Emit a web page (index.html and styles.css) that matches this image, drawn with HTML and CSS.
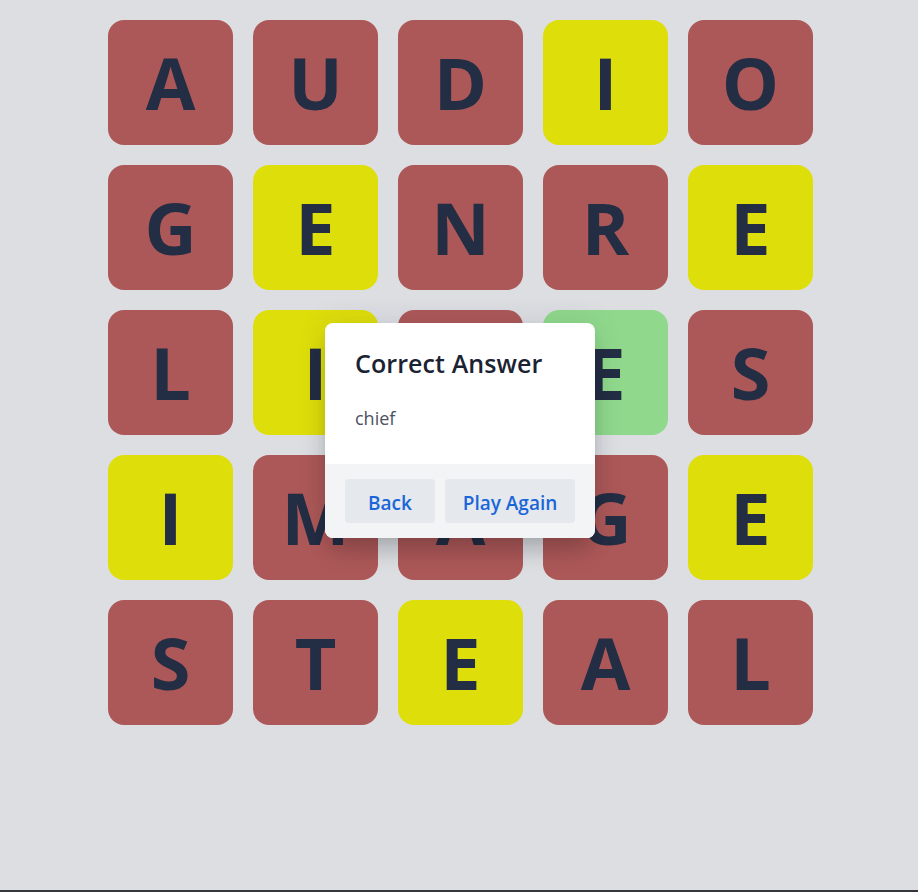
FILE: index.html
```html
<!DOCTYPE html>
<html lang="en">
<head>
<meta charset="utf-8">
<title>Word Game</title>
<link rel="stylesheet" href="styles.css">
</head>
<body>
<main class="page">
  <div class="board">
    <div class="tile red">A</div>
    <div class="tile red">U</div>
    <div class="tile red">D</div>
    <div class="tile yellow">I</div>
    <div class="tile red">O</div>

    <div class="tile red">G</div>
    <div class="tile yellow">E</div>
    <div class="tile red">N</div>
    <div class="tile red">R</div>
    <div class="tile yellow">E</div>

    <div class="tile red">L</div>
    <div class="tile yellow">I</div>
    <div class="tile red">K</div>
    <div class="tile green">E</div>
    <div class="tile red">S</div>

    <div class="tile yellow">I</div>
    <div class="tile red">M</div>
    <div class="tile red">A</div>
    <div class="tile red">G</div>
    <div class="tile yellow">E</div>

    <div class="tile red">S</div>
    <div class="tile red">T</div>
    <div class="tile yellow">E</div>
    <div class="tile red">A</div>
    <div class="tile red">L</div>
  </div>

  <div class="modal">
    <div class="modal-body">
      <h2 class="modal-title">Correct Answer</h2>
      <p class="modal-text">chief</p>
    </div>
    <div class="modal-footer">
      <button class="btn btn-back">Back</button>
      <button class="btn btn-again">Play Again</button>
    </div>
  </div>
</main>
</body>
</html>
```

FILE: styles.css
```css
* { box-sizing: border-box; }

html, body {
  margin: 0;
  padding: 0;
}

body {
  background: #dcdee2;
  font-family: "Open Sans", "Noto Sans", "Liberation Sans", sans-serif;
}

.page {
  position: relative;
  height: 892px;
  border-bottom: 2px solid #35373c;
  padding-top: 20px;
  display: flex;
  justify-content: center;
  align-items: flex-start;
  padding-left: 3px;
}

.board {
  display: grid;
  grid-template-columns: repeat(5, 125px);
  grid-auto-rows: 125px;
  gap: 20px;
}

.tile {
  border-radius: 16px;
  display: flex;
  align-items: center;
  justify-content: center;
  font-size: 72px;
  font-weight: 700;
  color: #232d43;
  line-height: 1;
  padding-bottom: 2px;
}

.red { background: #ad5858; }
.yellow { background: #dede0b; }
.green { background: #90d98c; }

.modal {
  position: absolute;
  left: 325px;
  top: 323px;
  width: 270px;
  height: 215px;
  background: #ffffff;
  border-radius: 8px;
  overflow: hidden;
  display: flex;
  flex-direction: column;
  box-shadow: 0 20px 25px -5px rgba(0, 0, 0, 0.12), 0 10px 20px -6px rgba(0, 0, 0, 0.1), 0 0 30px rgba(30, 40, 60, 0.12);
}

.modal-body {
  flex: 1;
  padding: 24px 30px 0;
}

.modal-title {
  margin: 0;
  font-size: 25px;
  font-weight: 600;
  color: #1b2333;
  line-height: 32px;
  letter-spacing: 0.1px;
}

.modal-text {
  margin: 26px 0 0;
  font-size: 18px;
  color: #4b5261;
  line-height: 26px;
}

.modal-footer {
  background: #f3f4f6;
  padding: 15px 20px 15px;
  display: flex;
  gap: 10px;
}

.btn {
  border: none;
  background: #e5e8ec;
  color: #1a66d9;
  font-family: inherit;
  font-size: 19px;
  font-weight: 600;
  height: 44px;
  border-radius: 4px;
  padding: 3px 0 0;
  cursor: pointer;
}

.btn-back { width: 90px; }
.btn-again { width: 130px; }
```
